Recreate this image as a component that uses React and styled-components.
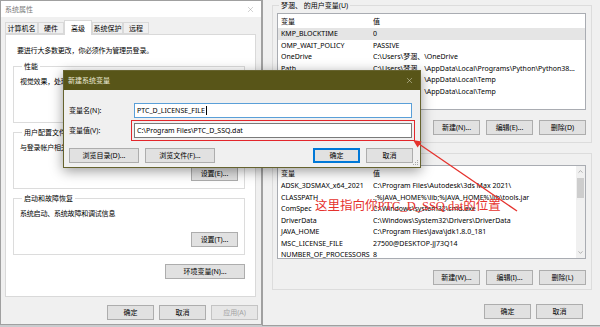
import styled, { createGlobalStyle } from "styled-components";
import { X, ChevronUp, ChevronDown } from "lucide-react";

const GlobalStyle = createGlobalStyle`
  html, body { margin: 0; padding: 0; background: #fff; }
  * { box-sizing: border-box; }
`;

const Desktop = styled.div`
  position: relative;
  width: 600px;
  height: 327px;
  overflow: hidden;
  background: #c9ccce;
  font-family: "Noto Sans", "Noto Sans CJK SC", sans-serif;
  font-size: 7px;
  line-height: 9px;
  color: #000;
`;

const Window = styled.div`
  position: absolute;
  left: ${(p) => p.$x}px;
  top: ${(p) => p.$y}px;
  width: ${(p) => p.$w}px;
  height: ${(p) => p.$h}px;
  background: #f0f0f0;
  border: 1px solid ${(p) => p.$border || "#a0a0a0"};
  display: flex;
  flex-direction: column;
  z-index: ${(p) => p.$z || 1};
  box-shadow: ${(p) => (p.$shadow ? "0 3px 12px rgba(0,0,0,0.4)" : "none")};
`;

const TitleBar = styled.div`
  height: ${(p) => p.$h || 16}px;
  flex-shrink: 0;
  display: flex;
  align-items: center;
  justify-content: space-between;
  padding: 0 6px 0 4px;
  background: ${(p) => p.$bg || "#fff"};
  color: ${(p) => p.$color || "#7a7a7a"};
`;

const TabStrip = styled.div`
  height: 17px;
  display: flex;
  align-items: flex-end;
  padding-left: 4px;
`;

const Tab = styled.div`
  width: ${(p) => p.$w}px;
  height: ${(p) => (p.$active ? 15 : 12)}px;
  margin-bottom: ${(p) => (p.$active ? -1 : 0)}px;
  border: 1px solid #d9d9d9;
  border-bottom: ${(p) => (p.$active ? "none" : "1px solid #d9d9d9")};
  background: ${(p) => (p.$active ? "#fff" : "#f0f0f0")};
  display: flex;
  align-items: center;
  justify-content: center;
  position: relative;
  z-index: ${(p) => (p.$active ? 2 : 1)};
`;

const TabPanel = styled.div`
  height: 263px;
  margin: 0 5px 0 4px;
  background: #fff;
  border: 1px solid #d9d9d9;
  padding: 11px 10px 0 7px;
  display: flex;
  flex-direction: column;
`;

const Notice = styled.div`
  padding-left: 4px;
  letter-spacing: -0.2px;
`;

const Group = styled.fieldset`
  margin: ${(p) => p.$mt || 0}px 0 0;
  height: ${(p) => p.$h}px;
  min-width: 0;
  padding: 0 ${(p) => p.$pr || 6}px 0 ${(p) => p.$pl || 6}px;
  border: 1px solid #dcdcdc;
  display: flex;
  flex-direction: column;
`;

const Legend = styled.legend`
  margin-left: 2px;
  padding: 0 2px;
  line-height: 9px;
`;

const GroupText = styled.div`
  margin-top: 6px;
  letter-spacing: -0.2px;
`;

const ButtonRow = styled.div`
  display: flex;
  justify-content: flex-end;
  gap: ${(p) => p.$gap || 6}px;
  margin-top: ${(p) => p.$mt || 0}px;
  padding-right: ${(p) => p.$pr || 0}px;
`;

const Button = styled.button`
  width: ${(p) => p.$w || 47}px;
  height: 15px;
  padding: 0;
  margin: 0;
  flex-shrink: 0;
  font: inherit;
  color: ${(p) => (p.disabled ? "#a3a3a3" : "#000")};
  background: ${(p) => (p.disabled ? "#e6e6e6" : "#e1e1e1")};
  border: 1px solid
    ${(p) => (p.$primary ? "#0078d7" : p.disabled ? "#c4c4c4" : "#adadad")};
  box-shadow: ${(p) => (p.$primary ? "inset 0 0 0 1px #0078d7" : "none")};
  display: flex;
  align-items: center;
  justify-content: center;
`;

const Body = styled.div`
  flex: 1;
  display: flex;
  flex-direction: column;
  padding: ${(p) => p.$pad};
`;

const ListBox = styled.div`
  margin-top: ${(p) => p.$mt}px;
  height: ${(p) => p.$h}px;
  flex-shrink: 0;
  background: #fff;
  border: 1px solid #a9acb2;
  display: flex;
  overflow: hidden;
`;

const ListBody = styled.div`
  flex: 1;
  min-width: 0;
`;

const ListHeader = styled.div`
  display: grid;
  grid-template-columns: 92px 1fr;
  height: 14px;
  align-items: center;
  padding-left: 3px;
`;

const ListRow = styled.div`
  display: grid;
  grid-template-columns: 92px minmax(0, 1fr);
  height: 11.5px;
  align-items: center;
  padding-left: 3px;
  white-space: nowrap;
  background: ${(p) => (p.$selected ? "#e5e5e5" : "transparent")};
`;

const NameCell = styled.span`
  overflow: visible;
`;

const ValueCell = styled.span`
  overflow: hidden;
  text-overflow: ellipsis;
  padding-right: 9px;
`;

const Scrollbar = styled.div`
  width: 9px;
  background: #f0f0f0;
  display: flex;
  flex-direction: column;
  align-items: center;
`;

const ScrollArrow = styled.div`
  height: 11px;
  display: flex;
  align-items: center;
  justify-content: center;
  color: #606060;
`;

const Thumb = styled.div`
  width: 7px;
  height: 20px;
  margin-top: 1px;
  background: #cdcdcd;
`;

const Filler = styled.div`
  flex: 1;
`;

const DialogBody = styled.div`
  flex: 1;
  position: relative;
  padding: 13px 7px 0 5px;
  display: flex;
  flex-direction: column;
  gap: 5px;
`;

const FieldRow = styled.div`
  display: flex;
  align-items: center;
  height: 15px;
`;

const FieldLabel = styled.div`
  width: 65px;
`;

const TextInput = styled.div`
  width: 278px;
  height: 15px;
  background: #fff;
  border: 1px solid ${(p) => (p.$focused ? "#5a9fd8" : "#7a7a7a")};
  padding-left: 2px;
  display: flex;
  align-items: center;
  white-space: nowrap;
  outline: ${(p) => (p.$marked ? "1.5px solid #e3262b" : "none")};
  outline-offset: 2px;
`;

const Caret = styled.span`
  display: inline-block;
  width: 1px;
  height: 9px;
  margin-left: 1px;
  background: #000;
`;

const DialogButtons = styled.div`
  display: flex;
  gap: 6px;
  margin-top: 5px;
`;

const Grip = styled.svg`
  position: absolute;
  right: 1px;
  bottom: 1px;
`;

const Overlay = styled.svg`
  position: absolute;
  inset: 0;
  z-index: 10;
  pointer-events: none;
`;

const Annotation = styled.div`
  position: absolute;
  left: 315px;
  top: 199px;
  z-index: 11;
  font-family: "Liberation Serif", "Noto Sans CJK SC", serif;
  font-size: 12.5px;
  line-height: 14px;
  color: #e5322d;
  white-space: nowrap;
`;

const userVars = [
  ["KMP_BLOCKTIME", "0"],
  ["OMP_WAIT_POLICY", "PASSIVE"],
  ["OneDrive", "C:\\Users\\梦涸、\\OneDrive"],
  [
    "Path",
    "C:\\Users\\梦涸、\\AppData\\Local\\Programs\\Python\\Python38\\Scripts\\;C:\\Users",
  ],
  ["TEMP", "C:\\Users\\梦涸、\\AppData\\Local\\Temp"],
  ["TMP", "C:\\Users\\梦涸、\\AppData\\Local\\Temp"],
];

const systemVars = [
  ["ADSK_3DSMAX_x64_2021", "C:\\Program Files\\Autodesk\\3ds Max 2021\\"],
  ["CLASSPATH", ".;%JAVA_HOME%\\lib;%JAVA_HOME%\\lib\\tools.jar"],
  ["ComSpec", "C:\\Windows\\system32\\cmd.exe"],
  ["DriverData", "C:\\Windows\\System32\\Drivers\\DriverData"],
  ["JAVA_HOME", "C:\\Program Files\\Java\\jdk1.8.0_181"],
  ["MSC_LICENSE_FILE", "27500@DESKTOP-JJ73Q14"],
  ["NUMBER_OF_PROCESSORS", "8"],
];

const tabs = [
  ["计算机名", 33],
  ["硬件", 26],
  ["高级", 28, true],
  ["系统保护", 31],
  ["远程", 26],
];

function VarList({ rows, height, mt, selected, scroll }) {
  return (
    <ListBox $h={height} $mt={mt}>
      <ListBody>
        <ListHeader>
          <span>变量</span>
          <span>值</span>
        </ListHeader>
        {rows.map(([name, value], i) => (
          <ListRow key={name} $selected={i === selected}>
            <NameCell>{name}</NameCell>
            <ValueCell>{value}</ValueCell>
          </ListRow>
        ))}
      </ListBody>
      {scroll && (
        <Scrollbar>
          <ScrollArrow>
            <ChevronUp size={7} strokeWidth={1.5} />
          </ScrollArrow>
          <Thumb />
          <Filler />
          <ScrollArrow>
            <ChevronDown size={7} strokeWidth={1.5} />
          </ScrollArrow>
        </Scrollbar>
      )}
    </ListBox>
  );
}

function SystemProperties() {
  return (
    <Window $x={0} $y={0} $w={262} $h={325}>
      <TitleBar>
        <span>系统属性</span>
        <X size={9} strokeWidth={1} color="#8a8a8a" />
      </TitleBar>
      <TabStrip>
        {tabs.map(([label, w, active]) => (
          <Tab key={label} $w={w} $active={active}>
            {label}
          </Tab>
        ))}
      </TabStrip>
      <TabPanel>
        <Notice>要进行大多数更改，你必须作为管理员登录。</Notice>
        <Group $mt={7} $h={61}>
          <Legend>性能</Legend>
          <GroupText>视觉效果，处理器计划，内存使用，以及虚拟内存</GroupText>
          <ButtonRow $mt={14}>
            <Button>设置(S)...</Button>
          </ButtonRow>
        </Group>
        <Group $mt={5} $h={61}>
          <Legend>用户配置文件</Legend>
          <GroupText>与登录帐户相关的桌面设置</GroupText>
          <ButtonRow $mt={14}>
            <Button>设置(E)...</Button>
          </ButtonRow>
        </Group>
        <Group $mt={5} $h={61}>
          <Legend>启动和故障恢复</Legend>
          <GroupText>系统启动、系统故障和调试信息</GroupText>
          <ButtonRow $mt={14}>
            <Button>设置(T)...</Button>
          </ButtonRow>
        </Group>
        <ButtonRow $mt={9}>
          <Button $w={80}>环境变量(N)...</Button>
        </ButtonRow>
      </TabPanel>
      <ButtonRow $mt={8} $gap={5} $pr={3}>
        <Button>确定</Button>
        <Button>取消</Button>
        <Button disabled>应用(A)</Button>
      </ButtonRow>
    </Window>
  );
}

function EnvironmentVariables() {
  return (
    <Window $x={262} $y={-1} $w={340} $h={327} $z={2}>
      <Body $pad="0 9px 0 9px">
        <Group $mt={1} $h={142} $pl={4} $pr={5}>
          <Legend>梦涸、 的用户变量(U)</Legend>
          <VarList rows={userVars} height={97} mt={3} selected={0} />
          <ButtonRow $mt={10}>
            <Button>新建(N)...</Button>
            <Button>编辑(E)...</Button>
            <Button>删除(D)</Button>
          </ButtonRow>
        </Group>
        <Group $mt={6} $h={141} $pl={4} $pr={5}>
          <Legend>系统变量(S)</Legend>
          <VarList rows={systemVars} height={94} mt={7} scroll />
          <ButtonRow $mt={11}>
            <Button>新建(W)...</Button>
            <Button>编辑(I)...</Button>
            <Button>删除(L)</Button>
          </ButtonRow>
        </Group>
        <ButtonRow $mt={14} $gap={5} $pr={9}>
          <Button>确定</Button>
          <Button>取消</Button>
        </ButtonRow>
      </Body>
    </Window>
  );
}

function NewVariableDialog() {
  return (
    <Window $x={63} $y={70} $w={358} $h={98} $z={3} $border="#66632f" $shadow>
      <TitleBar $h={19} $bg="#585518" $color="#ecebd8">
        <span>新建系统变量</span>
        <X size={9} strokeWidth={1.2} color="#ecebd8" />
      </TitleBar>
      <DialogBody>
        <FieldRow>
          <FieldLabel>变量名(N):</FieldLabel>
          <TextInput $focused>
            PTC_D_LICENSE_FILE
            <Caret />
          </TextInput>
        </FieldRow>
        <FieldRow>
          <FieldLabel>变量值(V):</FieldLabel>
          <TextInput $marked>C:\Program Files\PTC_D_SSQ.dat</TextInput>
        </FieldRow>
        <DialogButtons>
          <Button $w={70}>浏览目录(D)...</Button>
          <Button $w={70}>浏览文件(F)...</Button>
          <Filler />
          <Button $primary>确定</Button>
          <Button>取消</Button>
        </DialogButtons>
        <Grip width="6" height="6" viewBox="0 0 6 6">
          <rect x="4" y="0" width="1" height="1" fill="#a8a8a8" />
          <rect x="2" y="2" width="1" height="1" fill="#a8a8a8" />
          <rect x="4" y="2" width="1" height="1" fill="#a8a8a8" />
          <rect x="0" y="4" width="1" height="1" fill="#a8a8a8" />
          <rect x="2" y="4" width="1" height="1" fill="#a8a8a8" />
          <rect x="4" y="4" width="1" height="1" fill="#a8a8a8" />
        </Grip>
      </DialogBody>
    </Window>
  );
}

export default function App() {
  return (
    <>
      <GlobalStyle />
      <Desktop>
        <SystemProperties />
        <EnvironmentVariables />
        <NewVariableDialog />
        <Overlay width="600" height="327" viewBox="0 0 600 327">
          <line
            x1="517"
            y1="211"
            x2="419"
            y2="144"
            stroke="#e5322d"
            strokeWidth="1.3"
          />
          <polygon points="413,140 421.6,141.6 417.6,147.4" fill="#e5322d" />
        </Overlay>
        <Annotation>这里指向你PTC_D_SSQ.dat的位置</Annotation>
      </Desktop>
    </>
  );
}
